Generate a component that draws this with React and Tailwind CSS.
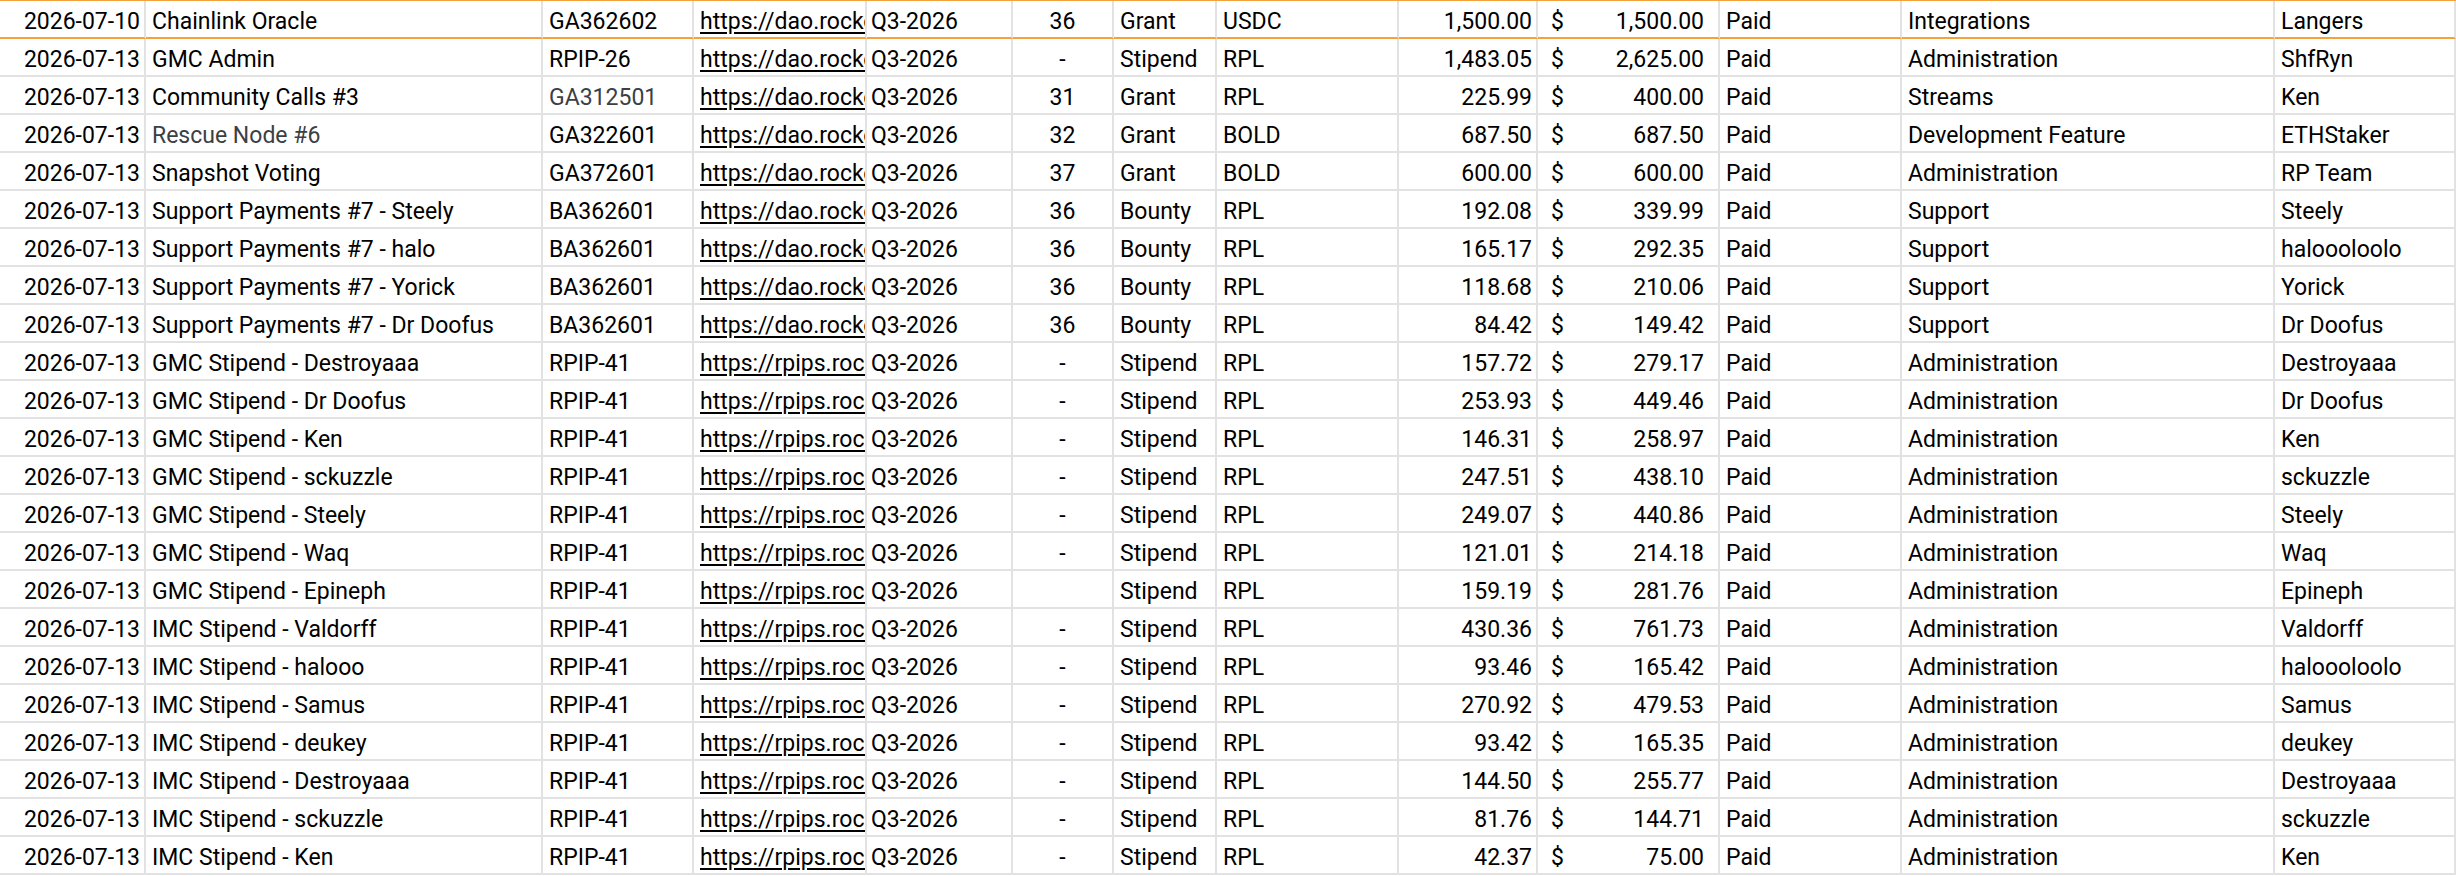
const DAO = "https://dao.rocketpool.net";
const RPIPS = "https://rpips.rocketpool.net";

const rows = [
  ["2026-07-10", "Chainlink Oracle", "GA362602", DAO, "36", "Grant", "USDC", "1,500.00", "1,500.00", "Integrations", "Langers"],
  ["2026-07-13", "GMC Admin", "RPIP-26", DAO, "-", "Stipend", "RPL", "1,483.05", "2,625.00", "Administration", "ShfRyn"],
  ["2026-07-13", "Community Calls #3", "GA312501", DAO, "31", "Grant", "RPL", "225.99", "400.00", "Streams", "Ken", false, true],
  ["2026-07-13", "Rescue Node #6", "GA322601", DAO, "32", "Grant", "BOLD", "687.50", "687.50", "Development Feature", "ETHStaker", true, false],
  ["2026-07-13", "Snapshot Voting", "GA372601", DAO, "37", "Grant", "BOLD", "600.00", "600.00", "Administration", "RP Team"],
  ["2026-07-13", "Support Payments #7 - Steely", "BA362601", DAO, "36", "Bounty", "RPL", "192.08", "339.99", "Support", "Steely"],
  ["2026-07-13", "Support Payments #7 - halo", "BA362601", DAO, "36", "Bounty", "RPL", "165.17", "292.35", "Support", "haloooloolo"],
  ["2026-07-13", "Support Payments #7 - Yorick", "BA362601", DAO, "36", "Bounty", "RPL", "118.68", "210.06", "Support", "Yorick"],
  ["2026-07-13", "Support Payments #7 - Dr Doofus", "BA362601", DAO, "36", "Bounty", "RPL", "84.42", "149.42", "Support", "Dr Doofus"],
  ["2026-07-13", "GMC Stipend - Destroyaaa", "RPIP-41", RPIPS, "-", "Stipend", "RPL", "157.72", "279.17", "Administration", "Destroyaaa"],
  ["2026-07-13", "GMC Stipend - Dr Doofus", "RPIP-41", RPIPS, "-", "Stipend", "RPL", "253.93", "449.46", "Administration", "Dr Doofus"],
  ["2026-07-13", "GMC Stipend - Ken", "RPIP-41", RPIPS, "-", "Stipend", "RPL", "146.31", "258.97", "Administration", "Ken"],
  ["2026-07-13", "GMC Stipend - sckuzzle", "RPIP-41", RPIPS, "-", "Stipend", "RPL", "247.51", "438.10", "Administration", "sckuzzle"],
  ["2026-07-13", "GMC Stipend - Steely", "RPIP-41", RPIPS, "-", "Stipend", "RPL", "249.07", "440.86", "Administration", "Steely"],
  ["2026-07-13", "GMC Stipend - Waq", "RPIP-41", RPIPS, "-", "Stipend", "RPL", "121.01", "214.18", "Administration", "Waq"],
  ["2026-07-13", "GMC Stipend - Epineph", "RPIP-41", RPIPS, "", "Stipend", "RPL", "159.19", "281.76", "Administration", "Epineph"],
  ["2026-07-13", "IMC Stipend - Valdorff", "RPIP-41", RPIPS, "-", "Stipend", "RPL", "430.36", "761.73", "Administration", "Valdorff"],
  ["2026-07-13", "IMC Stipend - halooo", "RPIP-41", RPIPS, "-", "Stipend", "RPL", "93.46", "165.42", "Administration", "haloooloolo"],
  ["2026-07-13", "IMC Stipend - Samus", "RPIP-41", RPIPS, "-", "Stipend", "RPL", "270.92", "479.53", "Administration", "Samus"],
  ["2026-07-13", "IMC Stipend - deukey", "RPIP-41", RPIPS, "-", "Stipend", "RPL", "93.42", "165.35", "Administration", "deukey"],
  ["2026-07-13", "IMC Stipend - Destroyaaa", "RPIP-41", RPIPS, "-", "Stipend", "RPL", "144.50", "255.77", "Administration", "Destroyaaa"],
  ["2026-07-13", "IMC Stipend - sckuzzle", "RPIP-41", RPIPS, "-", "Stipend", "RPL", "81.76", "144.71", "Administration", "sckuzzle"],
  ["2026-07-13", "IMC Stipend - Ken", "RPIP-41", RPIPS, "-", "Stipend", "RPL", "42.37", "75.00", "Administration", "Ken"],
];

function Cell({ children, className = "", first }) {
  return (
    <div
      className={`flex h-[38px] items-end overflow-hidden whitespace-nowrap border-r-2 border-b-2 pb-[2px] leading-[27px] ${
        first ? "border-b-[#f4a23c]" : "border-b-[#e2e2e2]"
      } border-r-[#e2e2e2] ${className}`}
    >
      {children}
    </div>
  );
}

function Row({ row, first }) {
  const [date, desc, code, url, num, type, token, amount, usd, category, recipient, grayDesc, grayCode] = row;

  return (
    <>
      <Cell first={first} className="justify-end pr-[4px]">{date}</Cell>
      <Cell first={first} className={`pl-[6px] ${grayDesc ? "text-[#3c4043]" : ""}`}>{desc}</Cell>
      <Cell first={first} className={`pl-[6px] ${grayCode ? "text-[#3c4043]" : ""}`}>{code}</Cell>
      <Cell first={first} className="pl-[6px]">
        <span className="underline underline-offset-[3px]">{url}</span>
      </Cell>
      <Cell first={first} className="pl-[4px]">Q3-2026</Cell>
      <Cell first={first} className="justify-center">{num}</Cell>
      <Cell first={first} className="pl-[6px]">{type}</Cell>
      <Cell first={first} className="pl-[6px]">{token}</Cell>
      <Cell first={first} className="justify-end pr-[4px]">{amount}</Cell>
      <Cell first={first} className="justify-between pl-[13px] pr-[14px]">
        <span>$</span>
        <span>{usd}</span>
      </Cell>
      <Cell first={first} className="pl-[6px]">Paid</Cell>
      <Cell first={first} className="pl-[6px]">{category}</Cell>
      <Cell first={first} className="border-r-0 pl-[6px]">{recipient}</Cell>
    </>
  );
}

export default function App() {
  return (
    <div className="w-[2456px] h-[876px] overflow-hidden bg-white font-['Roboto',sans-serif] text-[23px] text-black">
      <div className="-mt-[1px] border-t-2 border-[#f4a23c]">
        <div className="grid grid-cols-[146px_397px_151px_173px_146px_101px_103px_182px_139px_182px_182px_373px_1fr]">
          {rows.map((row, i) => (
            <Row key={i} row={row} first={i === 0} />
          ))}
        </div>
      </div>
    </div>
  );
}
